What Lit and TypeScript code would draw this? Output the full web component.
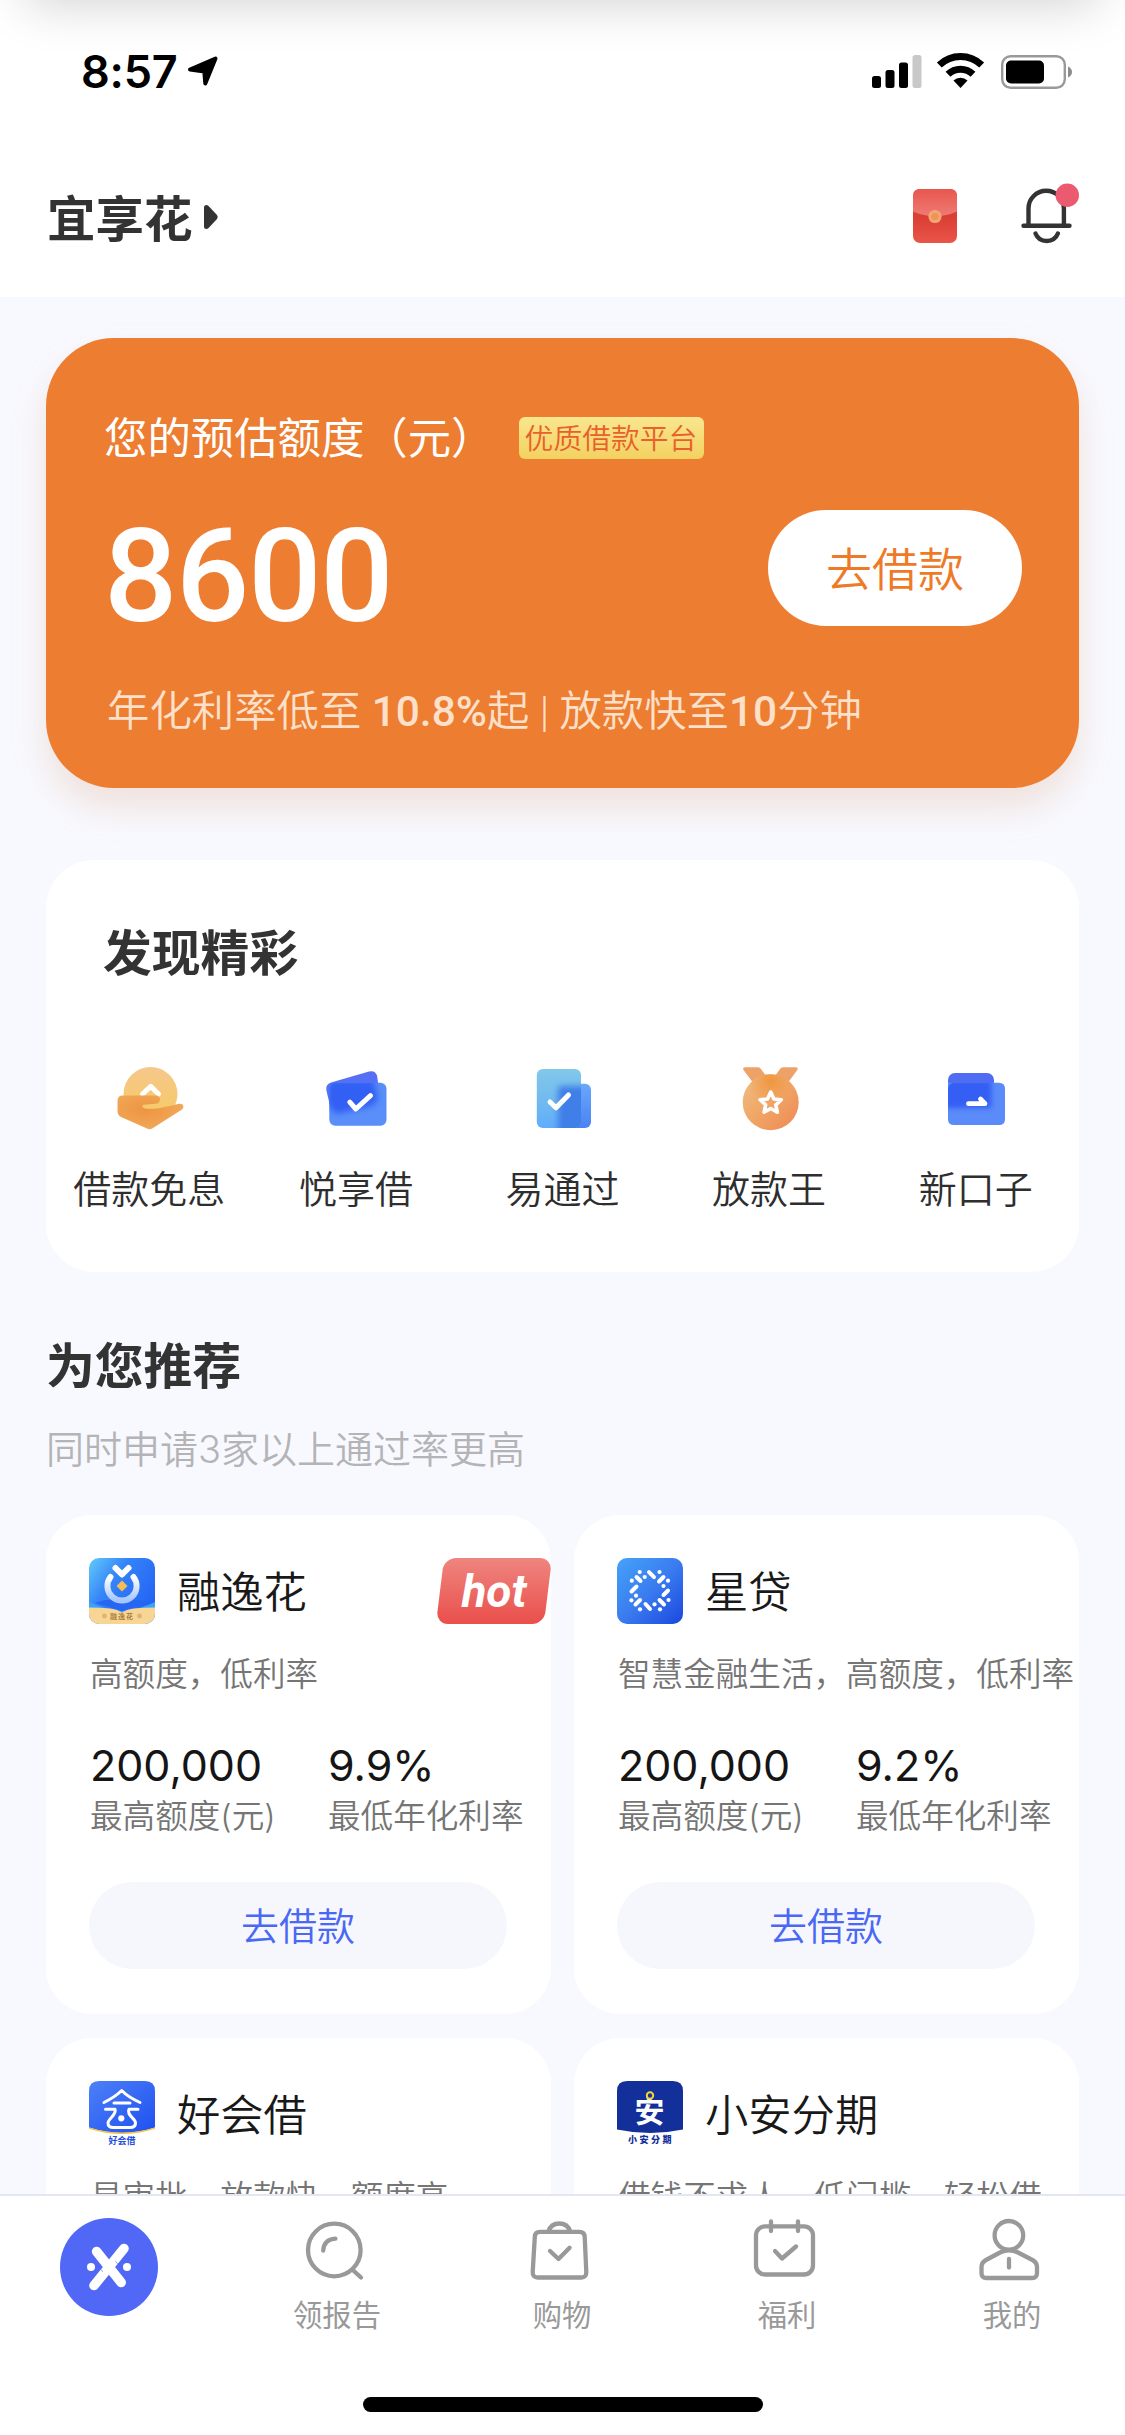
import { LitElement, html, svg, css, nothing } from "lit";
import { customElement, property } from "lit/decorators.js";

const discoverItems = [
  { label: "借款免息", icon: "hand" },
  { label: "悦享借", icon: "cards" },
  { label: "易通过", icon: "docs" },
  { label: "放款王", icon: "medal" },
  { label: "新口子", icon: "wallet" },
];

const products = [
  { name: "融逸花", logo: "rong", desc: "高额度，低利率", amount: "200,000", rate: "9.9%", hot: true },
  { name: "星贷", logo: "xing", desc: "智慧金融生活，高额度，低利率", amount: "200,000", rate: "9.2%", hot: false },
  { name: "好会借", logo: "hao", desc: "易审批，放款快，额度高", amount: "", rate: "", hot: false },
  { name: "小安分期", logo: "an", desc: "借钱不求人，低门槛，轻松借", amount: "", rate: "", hot: false },
];

const tabs = [
  { label: "领报告", icon: "report" },
  { label: "购物", icon: "bag" },
  { label: "福利", icon: "calendar" },
  { label: "我的", icon: "person" },
];

const art: Record<string, unknown> = {
  hand: svg`
    <defs>
      <linearGradient id="h1" x1="0" y1="0" x2="0" y2="1"><stop offset="0" stop-color="#f6c78b"/><stop offset="1" stop-color="#f5cb62"/></linearGradient>
      <radialGradient id="h2" cx=".42" cy=".42" r=".6"><stop offset="0" stop-color="#ee9440"/><stop offset="1" stop-color="#f0a95a"/></radialGradient>
    </defs>
    <circle cx="35.5" cy="30" r="27" fill="url(#h1)"/>
    <path d="M27.5 30l8.2-7.6 7.8 7.6" fill="none" stroke="#fff" stroke-width="5" stroke-linejoin="round" stroke-linecap="round"/>
    <path d="M8 31.6H41c5 0 5 6.2 1.500 8L29 40.800c-3 .6-1.500 3.200 1 3.600 9 1.600 20-1.200 34-4.600 4-1 6 2.600 3 5.600L38 64q-3 2-6 .6L6 53q-3.500-2-3.500-6V37q0-5.400 5.500-5.400z" fill="url(#h2)"/>`,
  cards: svg`
    <defs>
      <filter id="cb" x="-20%" y="-20%" width="140%" height="140%"><feGaussianBlur stdDeviation="3"/></filter>
      <clipPath id="cc"><rect x="7.300" y="18.700" width="57.200" height="43" rx="6"/></clipPath>
    </defs>
    <path d="M9 18.500L47 7.500q6-1.600 8 4l1.200 8L57 45 9.500 48 4.300 26q-1-5.500 4.700-7.500z" fill="#5570f4"/>
    <rect x="7.300" y="18.700" width="57.200" height="43" rx="6" fill="#5a8ff9"/>
    <g clip-path="url(#cc)"><path d="M6 16H52L56 36 50 42 14 50 5 40z" fill="#315ef4" filter="url(#cb)"/></g>
    <path d="M27.800 38.200l6 6.800 14.700-13.400" fill="none" stroke="#fff" stroke-width="5" stroke-linecap="round" stroke-linejoin="round"/>`,
  docs: svg`
    <defs>
      <linearGradient id="d1" x1="0" y1="0" x2="0" y2="1"><stop offset="0" stop-color="#82c8ea"/><stop offset=".5" stop-color="#72bbee"/><stop offset="1" stop-color="#60adfb"/></linearGradient>
      <linearGradient id="d2" x1="0" y1="0" x2="0" y2="1"><stop offset="0" stop-color="#69a8fb"/><stop offset="1" stop-color="#4b82f5"/></linearGradient>
      <filter id="db" x="-30%" y="-30%" width="160%" height="160%"><feGaussianBlur stdDeviation="3"/></filter>
      <clipPath id="dc"><rect x="8.800" y="5" width="44.200" height="59" rx="6"/></clipPath>
    </defs>
    <rect x="28" y="19.700" width="35" height="44.300" rx="6" fill="url(#d2)"/>
    <rect x="8.800" y="5" width="44.200" height="59" rx="6" fill="url(#d1)"/>
    <g clip-path="url(#dc)"><rect x="30" y="22" width="32" height="50" rx="4" fill="#407ee8" filter="url(#db)"/></g>
    <path d="M22 38l6 5.800L40.500 31" fill="none" stroke="#fff" stroke-width="5" stroke-linecap="round" stroke-linejoin="round"/>`,
  medal: svg`
    <defs>
      <linearGradient id="m1" x1="0" y1="0" x2="1" y2="1"><stop offset="0" stop-color="#f0bd85"/><stop offset=".45" stop-color="#f0a868"/><stop offset="1" stop-color="#ee8852"/></linearGradient>
      <radialGradient id="m2" cx=".5" cy=".12" r=".4"><stop offset="0" stop-color="#ef963f"/><stop offset="1" stop-color="#ef963f" stop-opacity="0"/></radialGradient>
    </defs>
    <path d="M10.500 3.300H23q2 0 3 1.600L31 12H40l5-7.100q1-1.600 3-1.600H60.500q3.500 0 1.600 3L52 20H19L8.700 6.300q-1.800-3 1.800-3z" fill="#eda26a"/>
    <circle cx="35.700" cy="38.200" r="28" fill="url(#m1)"/><circle cx="35.700" cy="38.200" r="28" fill="url(#m2)"/>
    <path d="M35.700 28l3.200 7 7.400.8-5.500 5.100 1.500 7.300-6.600-3.700-6.600 3.700 1.500-7.300-5.500-5.100 7.400-.8z" fill="none" stroke="#fff" stroke-width="3.600" stroke-linejoin="round"/>`,
  wallet: svg`
    <defs>
      <filter id="wb" x="-30%" y="-30%" width="160%" height="160%"><feGaussianBlur stdDeviation="2.500"/></filter>
      <clipPath id="wc"><rect x="6" y="18.700" width="57" height="42.500" rx="6"/></clipPath>
    </defs>
    <rect x="6" y="9" width="46" height="44" rx="7" fill="#506cf2"/>
    <path d="M6 18.700H57q6 0 6 6V55q0 6-6 6H12q-6 0-6-6z" fill="#5a8bf9"/>
    <g clip-path="url(#wc)"><rect x="3" y="16" width="46.500" height="28" fill="#355ff4" filter="url(#wb)"/></g>
    <path d="M26.500 39.700H43L38.500 35" fill="none" stroke="#fff" stroke-width="4.800" stroke-linecap="round" stroke-linejoin="round"/>`,
};

const logos: Record<string, unknown> = {
  rong: svg`
    <defs>
      <linearGradient id="l1" x1="0" y1="0" x2="1" y2=".7"><stop offset="0" stop-color="#62cbfa"/><stop offset=".4" stop-color="#3584f8"/><stop offset="1" stop-color="#2361f3"/></linearGradient>
      <linearGradient id="l2" x1="0" y1="0" x2="0" y2="1"><stop offset="0" stop-color="#fff"/><stop offset="1" stop-color="#a5c6fb"/></linearGradient>
      <clipPath id="lc"><rect width="66" height="66" rx="10"/></clipPath>
    </defs>
    <g clip-path="url(#lc)">
      <rect width="66" height="66" fill="url(#l1)"/>
      <path d="M0 44q14 7 33 9 19-2 33-9v10H0z" fill="#3ba4fa"/>
      <path d="M6 45q14 4 27 8 13-4 27-8l-10-3H16z" fill="#2766f2"/>
      <path d="M0 49.500q22 0 28 2.500l5 2.500 5-2.500q6-2.500 28-2.500V66H0z" fill="#f8d595"/>
      <path d="M21.500 19A14.600 14.600 0 1 0 44.500 19" fill="none" stroke="url(#l2)" stroke-width="6" stroke-linecap="round"/>
      <path d="M26.500 10l6.500 6.500 6.500-6.500" fill="none" stroke="#fff" stroke-width="6" stroke-linejoin="round" stroke-linecap="round"/>
      <path d="M33 22.500l5.500 5.500-5.500 5.500-5.500-5.500z" fill="#f5bd55"/>
      <circle cx="15.500" cy="58" r="2.400" fill="#dcb474"/><circle cx="50.500" cy="58" r="2.400" fill="#dcb474"/>
      <text x="33" y="61" text-anchor="middle" class="mini" fill="#a87e3c" letter-spacing="1">融逸花</text>
    </g>`,
  xing: svg`
    <defs><linearGradient id="x1" x1="0" y1="0" x2="1" y2="1"><stop offset="0" stop-color="#45a3f7"/><stop offset=".5" stop-color="#3a7cf0"/><stop offset="1" stop-color="#1b47de"/></linearGradient></defs>
    <rect width="66" height="66" rx="10" fill="url(#x1)"/>
    <g stroke="#fff" stroke-width="4" stroke-linecap="round">
      <path d="M32 14.200l5 5M19.500 19l4 4M46.500 19l-4.500 4.500M19.500 28.500l-5 5M51 32.500l-4.500 4.500M23 42l-4.500 4.500M42.500 42l4.500 4.500M28.500 46l4.500 5"/>
    </g>
    <g fill="#fff">
      ${[[22.7,14],[42.5,14],[27.7,19],[14.8,22.7],[51,22.7],[46.5,28],[19,37.7],[14.4,42.3],[51.5,42],[37.5,46.3],[23,51.3],[43,51.3]].map(
        ([x, y]) => svg`<circle cx=${x} cy=${y} r="2.100"/>`)}
    </g>`,
  hao: svg`
    <defs><linearGradient id="g1" x1="0" y1="0" x2="1" y2="1"><stop offset="0" stop-color="#4d80f8"/><stop offset="1" stop-color="#1f50f1"/></linearGradient></defs>
    <path d="M0 10Q0 0 10 0H56Q66 0 66 10V46.500Q33 57 0 46.500z" fill="url(#g1)"/>
    <path d="M0 47.200Q33 57.600 66 47.200" fill="none" stroke="#f4c43a" stroke-width="1.400"/>
    <g fill="none" stroke="#fff" stroke-width="3" stroke-linecap="round" stroke-linejoin="round">
      <path d="M15 21.500Q26 16 32.700 9.500 39 16 51 21.500M25 22H41M16.500 28.300H26C28 34 19 37.500 19 42q0 4.500 5.500 4.500H41q5.500 0 5.500-4.500C46.500 37.500 37 34 40 28.300H49"/>
    </g>
    <circle cx="32.300" cy="37.300" r="3.100" fill="#fff"/>
    <text x="33" y="63" text-anchor="middle" class="mini blue" fill="#1f4fe0">好会借</text>`,
  an: svg`
    <path d="M0 10Q0 0 10 0H56Q66 0 66 10V48.500Q33 55.500 0 48.500z" fill="#13309a"/>
    <text x="32.500" y="40.500" text-anchor="middle" class="big" fill="#fff">安</text>
    <circle cx="33" cy="14.500" r="3.200" fill="#13309a" stroke="#f5d532" stroke-width="2"/>
    <text x="34" y="61.800" text-anchor="middle" class="mini wide" fill="#13309a">小安分期</text>`,
};

const tabArt: Record<string, unknown> = {
  report: svg`<circle cx="29.300" cy="32" r="26.300"/><path d="M47.800 52l8.200 7.500M18.200 32.500Q19 21.500 30.400 20.700"/>`,
  bag: svg`<path d="M10 13.800H49.500q5 0 5.200 5L56.300 54q.2 5.500-5 5.500H7.700q-5.200 0-5-5.500L4.800 18.800q.2-5 5.200-5zM18.300 13.500Q21 5.500 29.300 5.500T40.300 13.500M20 33l8.500 8L39.600 29.800"/>`,
  calendar: svg`<rect x="1" y="8.300" width="57" height="48.200" rx="9"/><path d="M16 3.500V13M43 3.500V13M20 33l7 7.500L41 28.500"/>`,
  person: svg`<circle cx="28.900" cy="17.300" r="14.300"/><path d="M20 34.500L6 42Q1.500 44.500 1.500 49V55q0 5 5 5H52q5 0 5-5V49q0-4.500-4.500-7L38 34.500Q29 30 20 34.500zM29 41V49.500"/>`,
};

const base = css`
  * { box-sizing: border-box; margin: 0; }
  svg { display: block; flex: none; overflow: visible; }
`;

@customElement("product-card")
class ProductCard extends LitElement {
  @property({ attribute: false }) item!: (typeof products)[number];

  static styles = [
    base,
    css`
      :host { display: block; height: 499px; padding: 43px 44px 0 43px; border-radius: 46px; background: #fff; min-width: 0; white-space: nowrap; }
      .head { display: flex; align-items: center; height: 66px; }
      .name { margin-left: 22px; padding-top: 2px; font-size: 43.300px; font-weight: inherit; line-height: 60px; color: #191919; }
      .hot { position: relative; z-index: 0; margin: 0 -44px 0 auto; width: 114px; height: 66px; display: flex; align-items: center; justify-content: center; color: #fff; font: italic 700 46px/66px Roboto, sans-serif; }
      .hot::before { content: ""; position: absolute; z-index: -1; inset: 0 3px; border-radius: 12px; transform: skewX(-7deg); background: linear-gradient(#ef857f, #ea4f4b); }
      .desc { margin-top: 30px; height: 40px; line-height: 40px; font-size: 32.600px; color: #757575; padding-left: 1px; }
      .stats { display: grid; grid-template-columns: 238px auto; margin-top: 46px; padding-left: 1px; }
      .value { height: 50px; font-size: 43px; font-weight: 400; line-height: 50px; color: #151515; }
      .caption { height: 50px; line-height: 52px; font-size: 32.600px; color: #757575; }
      .apply { display: block; width: 100%; height: 87px; margin-top: 42px; padding: 2px 0 0; border: 0; border-radius: 44px; background: #f5f7fc; color: #4a67f5; font: inherit; font-size: 38px; line-height: 85px; text-align: center; }
      .mini { font-size: 7px; font-weight: 700; }
      .blue { font-size: 9px; }
      .wide { font-size: 9px; letter-spacing: 2.500px; font-weight: 900; }
      .big { font-size: 30px; font-weight: 700; }
    `,
  ];

  render() {
    const p = this.item;
    return html`
      <div class="head">
        <svg width="66" height="66" viewBox="0 0 66 66">${logos[p.logo]}</svg>
        <h3 class="name">${p.name}</h3>
        ${p.hot ? html`<span class="hot">hot</span>` : nothing}
      </div>
      <p class="desc">${p.desc}</p>
      ${p.amount
        ? html`
            <div class="stats">
              <div><div class="value">${p.amount}</div><div class="caption">最高额度(元)</div></div>
              <div><div class="value">${p.rate}</div><div class="caption">最低年化利率</div></div>
            </div>
            <button class="apply">去借款</button>
          `
        : nothing}
    `;
  }
}

@customElement("app-root")
class AppRoot extends LitElement {
  static styles = [
    base,
    css`
      :host { display: flex; flex-direction: column; width: 1125px; height: 2435px; overflow: hidden; position: relative; background: #f8f9ff; font-family: Inter, "Noto Sans CJK SC", sans-serif; font-weight: 350; color: #333; }
      .top { flex: none; height: 297px; background: #fff; position: relative; overflow: hidden; }
      .top::before { content: ""; position: absolute; left: 30px; right: 30px; top: -60px; height: 60px; box-shadow: 0 0 50px 4px rgba(0, 0, 0, .18); }
      .status { display: flex; align-items: center; height: 143px; padding: 0 53px 0 81px; color: #000; }
      .time { font-size: 45px; font-weight: 600; line-height: 60px; letter-spacing: -.2px; }
      .arrow { margin: -1px 0 0 9px; }
      .signal { margin-left: auto; }
      .wifi { margin: -2px 17px 0 16px; }
      .bar { display: flex; align-items: center; height: 148px; padding: 0 53px 0 47px; }
      .brand { font-size: 48.500px; font-weight: 700; line-height: 70px; padding-top: 5px; }
      .caret { margin-left: 11px; }
      .packet { margin-left: auto; margin-top: -2px; }
      .bell { margin: -6px 0 0 64px; }

      .main { flex: 1; min-height: 0; overflow: hidden; padding: 41px 46px 0; }
      .hero { height: 450px; padding: 70px 57px 0 58px; border-radius: 68px; background: #ed7d31; color: #fff; box-shadow: 0 20px 36px rgba(200, 110, 50, .17); }
      .hero-title { display: flex; align-items: center; height: 60px; line-height: 60px; font-size: 43.400px; font-weight: 400; }
      .tag { margin: -1px 0 0 24px; width: 185px; height: 42px; line-height: 44px; text-align: center; border-radius: 6px; font-size: 28.800px; color: #e8602c; background: linear-gradient(#f9e78f, #f3d160); font-weight: 350; }
      .hero-main { display: flex; align-items: center; justify-content: space-between; height: 116px; margin-top: 42px; }
      .quota { font: 500 129px/116px Roboto, sans-serif; letter-spacing: -1.200px; padding-top: 17px; }
      .borrow { width: 254px; height: 116px; padding: 2px 0 0; border: 0; border-radius: 58px; background: #fff; color: #ee7a28; font: inherit; font-size: 46px; line-height: 114px; }
      .hero-note { height: 60px; line-height: 60px; margin-top: 56px; padding-left: 3px; font-size: 42.400px; color: #fce0c9; font-family: Roboto, "Noto Sans CJK SC", sans-serif; white-space: pre; }
      .hero-note b { font-weight: 500; }

      .discover { height: 412px; margin-top: 72px; padding-top: 64px; border-radius: 48px; background: #fff; }
      .heading { font-size: 48.800px; font-weight: 700; line-height: 60px; }
      .discover .heading { padding-left: 57px; }
      .grid5 { display: grid; grid-template-columns: repeat(5, 1fr); margin-top: 80px; }
      .entry { display: flex; flex-direction: column; align-items: center; gap: 27px; font-size: 38px; line-height: 60px; color: #2e2e2e; }

      .rec { margin-top: 65px; }
      .sub { margin-top: 28px; height: 50px; line-height: 49px; font-size: 38px; color: #b4b4b6; }
      .cards { display: grid; grid-template-columns: 505px 505px; gap: 24px 23px; margin-top: 40px; }

      .tabs { flex: none; height: 241px; background: #fff; border-top: 2px solid #e4e7f1; display: flex; flex-direction: column; align-items: center; }
      .tabrow { display: grid; grid-template-columns: repeat(5, 225px); height: 201px; padding-top: 22px; }
      .tab { display: flex; flex-direction: column; align-items: center; color: #999; font-size: 29.300px; line-height: 40px; gap: 14px; font-weight: 400; }
      .tab span { margin-right: 1px; }
      .tab svg { margin-right: 1px; fill: none; stroke: #999; stroke-width: 4.300; stroke-linecap: round; stroke-linejoin: round; }
      .tab .logo { margin-right: 7px; stroke: none; }
      .home { width: 400px; height: 15px; border-radius: 8px; background: #000; }
    `,
  ];

  render() {
    return html`
      <header class="top">
        <div class="status">
          <span class="time">8:57</span>
          <svg class="arrow" width="31" height="31" viewBox="0 0 31 31"><path d="M28.500 2.500L18.300 27.500 17.300 15.500 3 13.500z" fill="#000" stroke="#000" stroke-width="4" stroke-linejoin="round"/></svg>
          <svg class="signal" width="49" height="33" viewBox="0 0 49 33">
            <rect x="0" y="21" width="9" height="12" rx="2.500"/><rect x="13.500" y="15" width="9" height="18" rx="2.500"/>
            <rect x="27" y="7.500" width="9" height="25.500" rx="2.500"/><rect x="40.500" y="0" width="9" height="33" rx="2.500" fill="#c8c8c8"/>
          </svg>
          <svg class="wifi" width="47" height="35" viewBox="0 0 47 35">
            <path d="M2.300 12A30.500 30.500 0 0 1 44.700 12M11 21.300A18 18 0 0 1 36 21.300" fill="none" stroke="#000" stroke-width="7"/>
            <path d="M23.500 35L16.500 27.500A10 10 0 0 1 30.500 27.500z"/>
          </svg>
          <svg width="71" height="34" viewBox="0 0 71 34">
            <rect x="1.200" y="1.200" width="62.600" height="31.600" rx="8.500" fill="none" stroke="#999" stroke-width="2.400"/>
            <rect x="5" y="5.500" width="38" height="23" rx="5"/><path d="M67 11.500q4 2 4 5.500t-4 5.500z" fill="#8c8c8c"/>
          </svg>
        </div>
        <div class="bar">
          <h1 class="brand">宜享花</h1>
          <svg class="caret" width="14" height="24" viewBox="0 0 14 24"><path d="M0 2.500Q0 0 2.500 0q1.500 0 3 2L13 10q1.500 2 0 4L5.500 22q-1.500 2-3 2Q0 24 0 21.500z" fill="#333"/></svg>
          <svg class="packet" width="44" height="54" viewBox="0 0 44 54">
            <defs><linearGradient id="p1" x1="0" y1="0" x2="0" y2="1"><stop offset="0" stop-color="#e6564c"/><stop offset=".5" stop-color="#da3d33"/><stop offset="1" stop-color="#ea5549"/></linearGradient>
            <linearGradient id="p2" x1="0" y1="0" x2="0" y2="1"><stop offset="0" stop-color="#e8574d"/><stop offset="1" stop-color="#ee7b75"/></linearGradient></defs>
            <rect width="44" height="54" rx="7" fill="url(#p1)"/>
            <path d="M0 7Q0 0 7 0H37Q44 0 44 7V22.500Q22 32 0 22.500z" fill="url(#p2)"/>
            <circle cx="22" cy="27.500" r="6.600" fill="#f2a673"/><circle cx="22" cy="27.500" r="3.600" fill="#f09455"/>
          </svg>
          <svg class="bell" width="51" height="60" viewBox="0 0 51 60">
            <path d="M7.500 41V24.500a17.700 17.700 0 0 1 35.400 0V41M2.500 41.700H48.500M14.500 49.500q3 7.500 11.200 7.500t11.200-7.500" fill="none" stroke="#333" stroke-width="4.400" stroke-linecap="round"/>
            <circle cx="46.300" cy="11.300" r="11.700" fill="#ec5a70"/>
          </svg>
        </div>
      </header>

      <main class="main">
        <section class="hero">
          <div class="hero-title"><span>您的预估额度（元）</span><span class="tag">优质借款平台</span></div>
          <div class="hero-main"><span class="quota">8600</span><button class="borrow">去借款</button></div>
          <p class="hero-note">年化利率低至 <b>10.8%</b>起 | 放款快至<b>10</b>分钟</p>
        </section>

        <section class="discover">
          <h2 class="heading">发现精彩</h2>
          <div class="grid5">
            ${discoverItems.map((d) => html`<div class="entry"><svg width="68" height="68" viewBox="0 0 68 68">${art[d.icon]}</svg><span>${d.label}</span></div>`)}
          </div>
        </section>

        <section class="rec">
          <h2 class="heading">为您推荐</h2>
          <p class="sub">同时申请3家以上通过率更高</p>
          <div class="cards">${products.map((p) => html`<product-card .item=${p}></product-card>`)}</div>
        </section>
      </main>

      <nav class="tabs">
        <div class="tabrow">
          <div class="tab">
            <svg class="logo" width="98" height="98" viewBox="-49 -49 98 98">
              <circle r="49" fill="#5168f6"/>
              <path d="M15-18.500L-15 18.500M-12.400-15.500L12.200 15.500" stroke="#fff" stroke-width="9.600"/>
              <circle cx="-18" cy="0" r="4" fill="#fff"/><circle cx="18" cy="0" r="4" fill="#fff"/>
              <path d="M-10.500-.8L-6.500 4.600M6.800-5.500L10.500-.8" stroke="#5168f6" stroke-width="1" opacity=".6"/>
            </svg>
          </div>
          ${tabs.map((t) => html`<div class="tab"><svg width="64" height="64" viewBox="0 0 64 64">${tabArt[t.icon]}</svg><span>${t.label}</span></div>`)}
        </div>
        <div class="home"></div>
      </nav>
    `;
  }
}
